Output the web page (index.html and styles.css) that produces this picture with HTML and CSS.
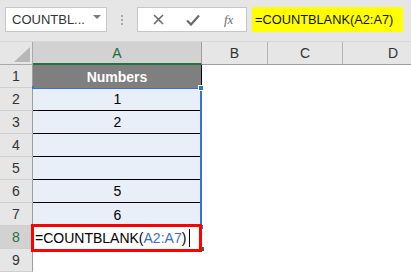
FILE: index.html
```html
<!DOCTYPE html>
<html lang="en">
  <head>
    <meta charset="UTF-8" />
    <title>COUNTBLANK</title>
    <link rel="stylesheet" href="styles.css">
  </head>
  <body>
    <div class="toolbar">
      <div class="nameBox">
        <span class="nameText">COUNTBL...</span>
        <svg class="dropArrow" width="8" height="4" viewBox="0 0 8 4"><polygon points="0,0 8,0 4,4" fill="#7a7a7a"/></svg>
      </div>
      <div class="dots"><span></span><span></span><span></span></div>
      <div class="fxButtons">
        <svg width="11" height="11" viewBox="0 0 11 11"><path d="M1 1 L10 10 M10 1 L1 10" stroke="#6a6a6a" stroke-width="1.6"/></svg>
        <svg width="14" height="12" viewBox="0 0 14 12"><path d="M1 6.5 L5 10.5 L13 1.5" stroke="#6a6a6a" stroke-width="2.2" fill="none"/></svg>
        <span class="fxLabel">fx</span>
      </div>
      <div class="formulaInput">=COUNTBLANK(A2:A7)</div>
    </div>

    <div class="sheetWrap">
      <div class="sheet">
        <div class="corner"><svg width="16" height="15" viewBox="0 0 16 15"><polygon points="16,0 16,15 0,15" fill="#b7b7b7"/></svg></div>
        <div class="colHead active">A</div>
        <div class="colHead">B</div>
        <div class="colHead">C</div>
        <div class="colHead">D</div>

        <div class="rowHead">1</div>
        <div class="cell title">Numbers</div>
        <div class="cell"></div><div class="cell"></div><div class="cell"></div>

        <div class="rowHead">2</div>
        <div class="cell data">1</div>
        <div class="cell"></div><div class="cell"></div><div class="cell"></div>

        <div class="rowHead">3</div>
        <div class="cell data">2</div>
        <div class="cell"></div><div class="cell"></div><div class="cell"></div>

        <div class="rowHead">4</div>
        <div class="cell data"></div>
        <div class="cell"></div><div class="cell"></div><div class="cell"></div>

        <div class="rowHead">5</div>
        <div class="cell data"></div>
        <div class="cell"></div><div class="cell"></div><div class="cell"></div>

        <div class="rowHead">6</div>
        <div class="cell data">5</div>
        <div class="cell"></div><div class="cell"></div><div class="cell"></div>

        <div class="rowHead">7</div>
        <div class="cell data last">6</div>
        <div class="cell"></div><div class="cell"></div><div class="cell"></div>

        <div class="rowHead active">8</div>
        <div class="cell editing">=COUNTBLANK(<span class="ref">A2:A7</span>)<span class="caret"></span></div>
        <div class="cell"></div><div class="cell"></div><div class="cell"></div>

        <div class="rowHead">9</div>
        <div class="cell"></div>
        <div class="cell"></div><div class="cell"></div><div class="cell"></div>
      </div>

      <div class="refRange">
        <span class="handle tl"></span>
        <span class="handle tr"></span>
        <span class="handle br"></span>
      </div>
      <div class="fillHandle"></div>
      <div class="redBox"></div>
    </div>
  </body>
</html>
```

FILE: styles.css
```css
body {
  margin: 0;
  width: 411px;
  height: 273px;
  overflow: hidden;
  background-color: #fff;
  font-family: "Liberation Sans", Arial, sans-serif;
}
.toolbar {
  height: 42px;
  background-color: #e6e6e6;
  border-bottom: 1px solid #d6d6d6;
  display: flex;
  align-items: flex-start;
  padding: 7px 0 0 5px;
  box-sizing: border-box;
}
.nameBox {
  width: 102px;
  height: 25px;
  box-sizing: border-box;
  background-color: #fff;
  border: 1px solid #c6c6c6;
  display: flex;
  align-items: center;
  justify-content: space-between;
  padding: 0 5px 0 6px;
}
.nameText {
  font-size: 13px;
  color: #333;
}
.dropArrow {
  margin-top: -5px;
}
.dots {
  width: 30px;
  height: 25px;
  display: flex;
  flex-direction: column;
  align-items: center;
  justify-content: center;
  gap: 2px;
}
.dots span {
  width: 2px;
  height: 2px;
  background-color: #a8a8a8;
}
.fxButtons {
  width: 110px;
  height: 25px;
  box-sizing: border-box;
  background-color: #fff;
  border: 1px solid #c6c6c6;
  display: flex;
  align-items: center;
  padding-left: 15px;
  gap: 22px;
}
.fxLabel {
  font-family: "Liberation Serif", "Times New Roman", serif;
  font-style: italic;
  font-size: 13px;
  color: #6a6a6a;
  margin-left: 2px;
}
.formulaInput {
  margin-left: 5px;
  width: 151px;
  height: 25px;
  box-sizing: border-box;
  background-color: #ffff00;
  font-size: 12.8px;
  color: #111;
  display: flex;
  align-items: center;
  padding-left: 3px;
}
.sheetWrap {
  position: relative;
  width: 411px;
  overflow: hidden;
}
.sheet {
  display: grid;
  grid-template-columns: 33px 169px 66px 75px 68px;
  grid-auto-rows: 23px;
  font-size: 14px;
}
.corner {
  background-color: #e6e6e6;
  border-right: 1px solid #a9a9a9;
  border-bottom: 1px solid #a9a9a9;
  display: flex;
  align-items: flex-end;
  justify-content: flex-end;
  padding: 0 2px 2px 0;
}
.colHead {
  background-color: #e6e6e6;
  border-right: 1px solid #b4b4b4;
  border-bottom: 1px solid #9e9e9e;
  color: #333;
  display: flex;
  align-items: center;
  justify-content: center;
}
.colHead:last-child {
  border-right: none;
}
.colHead.active {
  background-color: #d2d2d2;
  color: #1d6b40;
  border-bottom: 2px solid #217346;
  border-right-color: #9e9e9e;
}
.sheet > .colHead:nth-child(5) {
  justify-content: flex-start;
  padding-left: 45px;
  border-right: none;
}
.rowHead {
  background-color: #e6e6e6;
  border-right: 1px solid #9e9e9e;
  border-bottom: 1px solid #cfcfcf;
  color: #333;
  display: flex;
  align-items: center;
  justify-content: center;
  box-sizing: border-box;
}
.rowHead.active {
  background-color: #d2d2d2;
  color: #217346;
}
.cell {
  display: flex;
  align-items: center;
  justify-content: center;
  color: #000;
  box-sizing: border-box;
}
.cell.title {
  background-color: #7f7f7f;
  color: #fff;
  font-weight: bold;
  border-right: 1px solid #000;
}
.cell.data {
  background-color: #e9eff8;
  border-bottom: 1px solid #000;
}
.cell.data.last {
  border-bottom: none;
}
.cell.editing {
  justify-content: flex-start;
  padding-left: 2px;
  white-space: nowrap;
}
.ref {
  color: #3c6fc4;
}
.caret {
  display: inline-block;
  width: 1px;
  height: 18px;
  background-color: #000;
  margin-left: 3px;
}
.refRange {
  position: absolute;
  left: 33px;
  top: 46px;
  width: 169px;
  height: 137px;
  box-sizing: border-box;
  border-top: 1px solid #3a72d2;
  border-right: 2px solid #3a72d2;
}
.handle {
  position: absolute;
  background-color: #3a72d2;
  border: 1px solid #fff;
}
.handle.tl {
  left: -1px;
  top: -3px;
  width: 2px;
  height: 3px;
  border: none;
}
.handle.tr {
  right: -4px;
  top: -4px;
  width: 4px;
  height: 4px;
}
.handle.br {
  right: -3px;
  bottom: -4px;
  width: 3px;
  height: 4px;
  border: none;
}
.fillHandle {
  position: absolute;
  left: 201px;
  top: 205px;
  width: 3px;
  height: 4px;
  background-color: #217346;
}
.redBox {
  position: absolute;
  left: 31px;
  top: 182px;
  width: 171px;
  height: 28px;
  box-sizing: border-box;
  border: 3px solid #ff0000;
}
```
